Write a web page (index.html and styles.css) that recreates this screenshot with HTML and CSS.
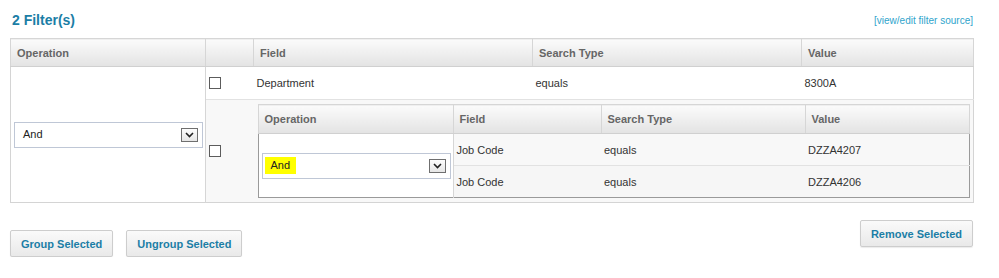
FILE: index.html
```html
<!DOCTYPE html>
<html lang="en">
<head>
  <meta charset="UTF-8">
  <title>filters</title>
  <link rel="stylesheet" href="styles.css">
</head>
<body>
  <div class="panel">
    <div class="titlebar">
      <h2 class="title">2 Filter(s)</h2>
      <a class="source" href="#">[view/edit filter source]</a>
    </div>
    <table class="grid outer">
      <colgroup>
        <col style="width:195px">
        <col style="width:48px">
        <col style="width:279px">
        <col style="width:269px">
        <col style="width:172px">
      </colgroup>
      <thead>
        <tr>
          <th>Operation</th>
          <th></th>
          <th>Field</th>
          <th>Search Type</th>
          <th>Value</th>
        </tr>
      </thead>
      <tbody>
        <tr class="row">
          <td rowspan="2" class="opcell">
            <div class="select">
              <span class="val">And</span>
              <span class="arrow"><svg width="9" height="6" viewBox="0 0 9 6"><path d="M1 1 L4.5 4.5 L8 1" fill="none" stroke="#222" stroke-width="1.6"/></svg></span>
            </div>
          </td>
          <td class="cb"><input type="checkbox" class="chk"></td>
          <td>Department</td>
          <td>equals</td>
          <td>8300A</td>
        </tr>
        <tr class="row alt">
          <td class="cb"><input type="checkbox" class="chk"></td>
          <td colspan="3" class="nest">
            <table class="grid inner">
              <colgroup>
                <col style="width:195px">
                <col style="width:148px">
                <col style="width:204px">
                <col style="width:164px">
              </colgroup>
              <thead>
                <tr>
                  <th>Operation</th>
                  <th>Field</th>
                  <th>Search Type</th>
                  <th>Value</th>
                </tr>
              </thead>
              <tbody>
                <tr class="row">
                  <td rowspan="2" class="opcell">
                    <div class="select">
                      <span class="val hl">And</span>
                      <span class="arrow"><svg width="9" height="6" viewBox="0 0 9 6"><path d="M1 1 L4.5 4.5 L8 1" fill="none" stroke="#222" stroke-width="1.6"/></svg></span>
                    </div>
                  </td>
                  <td>Job Code</td>
                  <td>equals</td>
                  <td>DZZA4207</td>
                </tr>
                <tr class="row alt">
                  <td>Job Code</td>
                  <td>equals</td>
                  <td>DZZA4206</td>
                </tr>
              </tbody>
            </table>
          </td>
        </tr>
      </tbody>
    </table>
    <div class="actions">
      <div class="left">
        <button class="btn">Group Selected</button>
        <button class="btn">Ungroup Selected</button>
      </div>
      <button class="btn">Remove Selected</button>
    </div>
  </div>
</body>
</html>
```

FILE: styles.css
```css
body {
  margin: 0;
  font-family: 'Liberation Sans', Arial, sans-serif;
  font-size: 11px;
  color: #333;
  background: #fff;
}
.panel {
  width: 963px;
  padding: 0 0 0 10px;
}
.titlebar {
  display: flex;
  justify-content: space-between;
  align-items: center;
  height: 20px;
  padding-top: 10px;
  margin-bottom: 8px;
}
.title {
  margin: 0 0 0 2px;
  font-size: 14px;
  font-weight: bold;
  color: #1b7ea6;
}
.source {
  font-size: 10px;
  color: #2fa4cc;
  text-decoration: none;
}

/* tables */
.grid {
  border-collapse: collapse;
  table-layout: fixed;
}
.outer {
  width: 963px;
  border: 1px solid #d4d4d4;
}
.grid th {
  height: 27px;
  padding: 0 6px;
  text-align: left;
  font-weight: bold;
  color: #666;
  background: linear-gradient(#fbfbfb, #e3e3e3);
  border: 1px solid #d6d6d6;
  border-bottom-color: #d0d0d0;
}
.grid td {
  height: 32px;
  padding: 0 3px;
  border-top: 1px solid #e2e2e2;
  vertical-align: middle;
}
.outer td.opcell {
  background: #fff;
  border-right: 1px solid #d6d6d6;
  padding: 0 3px;
}
.row.alt td {
  background: #f8f8f8;
}
.row.alt td.opcell {
  background: #fff;
}
.cb {
  padding-left: 3px;
}
.chk {
  appearance: none;
  -webkit-appearance: none;
  display: block;
  margin: 0;
  width: 12px;
  height: 12px;
  border: 1px solid #5c5c5c;
  background: #fff;
}
.outer td.nest {
  padding: 4px;
  height: auto;
}
.inner {
  width: 712px;
  border: 1px solid #9a9a9a;
  box-shadow: inset 1px 1px 0 #d8d8d8;
}
.inner th {
  height: 28px;
}
.inner td {
  height: 31px;
  padding: 0 3px;
}
.inner td.opcell {
  background: #fff;
  border-right: 1px solid #d6d6d6;
}
.inner .row.alt td {
  background: #f6f6f6;
}

/* fake dropdown */
.select {
  display: flex;
  align-items: center;
  justify-content: space-between;
  box-sizing: border-box;
  width: 189px;
  height: 26px;
  padding: 0 4px 0 2px;
  border: 1px solid #bfc7d6;
  background: #fff;
  font-size: 11px;
  color: #222;
}
.val {
  padding: 2px 6px;
  line-height: 13px;
}
.val.hl {
  background: #ffff00;
}
.arrow {
  display: flex;
  align-items: center;
  justify-content: center;
  box-sizing: border-box;
  width: 17px;
  height: 14px;
  border: 1px solid #6f6f6f;
  background: linear-gradient(#fdfdfd, #e6e6e6);
}

/* buttons */
.actions {
  display: flex;
  justify-content: space-between;
  align-items: flex-start;
  margin-top: 17px;
}
.left {
  display: flex;
  gap: 13px;
  margin-top: 10px;
}
.btn {
  height: 27px;
  padding: 0 10px;
  font-family: 'Liberation Sans', Arial, sans-serif;
  font-size: 11px;
  font-weight: bold;
  color: #1b7ea6;
  background: linear-gradient(#fafafa, #e9e9e9);
  border: 1px solid #cdcdcd;
  border-radius: 2px;
  box-shadow: 0 1px 1px rgba(0,0,0,0.08);
}
```
